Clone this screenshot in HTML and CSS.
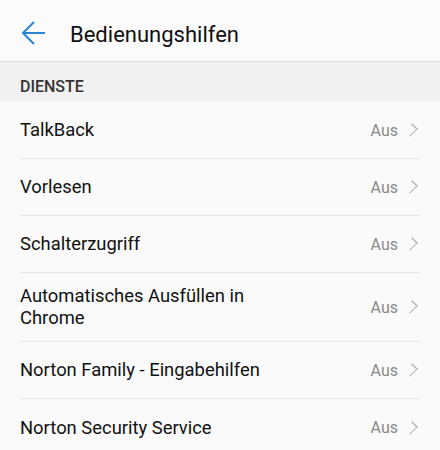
FILE: index.html
```html
<!DOCTYPE html>
<html lang="de">
<head>
  <meta charset="UTF-8">
  <meta name="viewport" content="width=device-width, initial-scale=1.0">
  <title>Bedienungshilfen</title>
  <link rel="stylesheet" href="styles.css">
</head>
<body>
  <header class="topbar">
    <svg class="back" width="24" height="24" viewBox="0 0 24 24">
      <path d="M23 12H2M12 1L1 12l11 11" fill="none" stroke="#2a88d2" stroke-width="2"/>
    </svg>
    <h1>Bedienungshilfen</h1>
  </header>
  <div class="section">DIENSTE</div>
  <ul class="list">
    <li class="item"><span class="label">TalkBack</span><span class="value">Aus</span><span class="chev"></span></li>
    <li class="item"><span class="label">Vorlesen</span><span class="value">Aus</span><span class="chev"></span></li>
    <li class="item"><span class="label">Schalterzugriff</span><span class="value">Aus</span><span class="chev"></span></li>
    <li class="item"><span class="label narrow">Automatisches Ausfüllen in Chrome</span><span class="value">Aus</span><span class="chev"></span></li>
    <li class="item"><span class="label">Norton Family - Eingabehilfen</span><span class="value">Aus</span><span class="chev"></span></li>
    <li class="item"><span class="label">Norton Security Service</span><span class="value">Aus</span><span class="chev"></span></li>
  </ul>
</body>
</html>
```

FILE: styles.css
```css
body {
  margin: 0;
  background-color: #fafafa;
  font-family: Roboto, "Noto Sans", sans-serif;
  color: #111;
}

.topbar {
  display: flex;
  align-items: center;
  height: 53px;
  padding: 8px 22px 0;
  background-color: #fbfbfb;
  border-bottom: 1px solid #dcdcdc;
  box-sizing: content-box;
}

.topbar .back {
  flex: none;
  margin-top: -4px;
}

.topbar h1 {
  margin: 0 0 0 24px;
  font-size: 22px;
  font-weight: 400;
  color: #111;
}

.section {
  height: 40px;
  line-height: 50px;
  padding: 0 20px;
  background-color: #f1f1f1;
  font-size: 16px;
  font-weight: 500;
  color: #333;
}

.list {
  list-style: none;
  margin: 0;
  padding: 0 20px;
}

.item {
  display: flex;
  align-items: center;
  min-height: 57px;
  padding: 12px 0;
  box-sizing: border-box;
  border-bottom: 1px solid #e6e6e6;
}

.item:last-child {
  border-bottom: none;
}

.label {
  font-size: 18.4px;
  line-height: 22px;
}

.label.narrow {
  max-width: 250px;
}

.value {
  font-size: 16px;
  color: #8a8a8a;
  margin-left: auto;
  padding-left: 12px;
}

.chev {
  flex: none;
  width: 7px;
  height: 7px;
  margin: 0 5px 0 9px;
  border-top: 1px solid #b0b0b0;
  border-right: 1px solid #b0b0b0;
  transform: rotate(45deg) scaleY(1.4);
}
```
